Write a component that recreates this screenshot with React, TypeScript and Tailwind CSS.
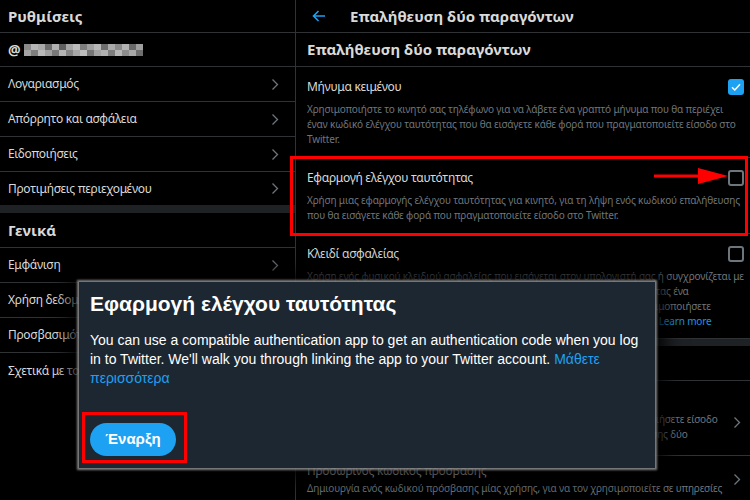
import type { ReactNode } from "react";

const line = "border-[#2f3336]";
const desc = "text-[10px] leading-[15px] tracking-[-0.15px] text-[#6e767d]";

function Chevron() {
  return (
    <svg width="8" height="13" viewBox="0 0 8 13" className="shrink-0">
      <path d="M1.5 1.5 L6.5 6.5 L1.5 11.5" fill="none" stroke="#6e767d" strokeWidth="1.3" />
    </svg>
  );
}

function Checkbox({ checked }: { checked?: boolean }) {
  if (checked) {
    return (
      <div className="w-[16px] h-[16px] rounded-[3px] bg-[#1da1f2] flex items-center justify-center shrink-0">
        <svg width="10" height="8" viewBox="0 0 10 8">
          <path d="M1 4.2 L3.8 7 L9 1.2" fill="none" stroke="#fff" strokeWidth="1.5" />
        </svg>
      </div>
    );
  }
  return <div className="w-[16px] h-[16px] rounded-[3px] border-2 border-[#6e767d] shrink-0" />;
}

function NavRow({ label, h = "h-[35px]", last }: { label: string; h?: string; last?: boolean }) {
  return (
    <div
      className={`${h} flex items-center justify-between pl-2 pr-[16px] text-[12px] tracking-[-0.3px] ${last ? "" : `border-b ${line}`}`}
    >
      <span>{label}</span>
      <Chevron />
    </div>
  );
}

const mosaic = [
  ["#8a8a8a", "#b5b5b5", "#a8a8a8", "#6c6c6c", "#b0b0b0", "#5f5f5f", "#a5a5a5", "#bcbcbc", "#7f7f7f", "#a0a0a0", "#b8b8b8", "#6d6d6d", "#a9a9a9", "#8a8a8a", "#b2b2b2", "#6a6a6a", "#9f9f9f"],
  ["#a4a4a4", "#7e7e7e", "#b9b9b9", "#a0a0a0", "#787878", "#b3b3b3", "#848484", "#a6a6a6", "#bdbdbd", "#757575", "#a2a2a2", "#b0b0b0", "#7d7d7d", "#b6b6b6", "#8c8c8c", "#a7a7a7", "#6e6e6e"],
];

function Item({
  title,
  lines,
  checked,
  pb = "pb-[10px]",
}: {
  title: string;
  lines: ReactNode[];
  checked?: boolean;
  pb?: string;
}) {
  return (
    <div className={`pt-[10px] ${pb} pl-[11px] pr-[6px] border-b ${line}`}>
      <div className="h-[20px] flex items-center justify-between">
        <span className="text-[12px] tracking-[-0.3px]">{title}</span>
        <Checkbox checked={checked} />
      </div>
      <div className={`mt-[5px] ${desc}`}>
        {lines.map((l, i) => (
          <div key={i} className="whitespace-nowrap">
            {l}
          </div>
        ))}
      </div>
    </div>
  );
}

export default function App() {
  return (
    <div className="relative w-[750px] h-[500px] overflow-hidden bg-black font-['Noto_Sans',sans-serif] text-[#d9d9d9]">
      <div className="flex h-full">
        {/* left: settings menu */}
        <aside className={`w-[296px] shrink-0 border-r ${line}`}>
          <div className={`h-[33px] border-b ${line} flex items-center px-2 text-[15px] font-bold`}>Ρυθμίσεις</div>
          <div className={`h-[34px] border-b ${line} flex items-center px-2`}>
            <span className="text-[14px] font-bold">@</span>
            <div className="ml-[3px] flex flex-col">
              {mosaic.map((row, r) => (
                <div key={r} className="flex">
                  {row.map((c, i) => (
                    <div key={i} className="w-[7px] h-[6px]" style={{ background: c }} />
                  ))}
                </div>
              ))}
            </div>
          </div>
          <NavRow label="Λογαριασμός" />
          <NavRow label="Απόρρητο και ασφάλεια" />
          <NavRow label="Ειδοποιήσεις" />
          <NavRow label="Προτιμήσεις περιεχομένου" h="h-[33px]" last />
          <div className="h-[8px] bg-[#1f2225]" />
          <div className={`h-[35px] border-b ${line} flex items-center px-2 text-[15px] font-bold`}>Γενικά</div>
          <NavRow label="Εμφάνιση" />
          <NavRow label="Χρήση δεδομένων" />
          <NavRow label="Προσβασιμότητα" />
          <NavRow label="Σχετικά με το Twitter" last />
        </aside>

        {/* right: two-factor page */}
        <main className="flex-1 min-w-0">
          <div className={`h-[33px] border-b ${line} flex items-center`}>
            <svg width="14" height="12" viewBox="0 0 14 12" className="ml-[16px]">
              <path d="M13 6 H1.5 M6.5 1 L1.5 6 L6.5 11" fill="none" stroke="#1da1f2" strokeWidth="1.6" />
            </svg>
            <span className="ml-[24px] text-[15px] font-bold">Επαλήθευση δύο παραγόντων</span>
          </div>
          <div className={`h-[34px] border-b ${line} flex items-center pl-[11px] text-[15px] font-bold`}>
            Επαλήθευση δύο παραγόντων
          </div>
          <Item
            title="Μήνυμα κειμένου"
            checked
            lines={[
              "Χρησιμοποιήστε το κινητό σας τηλέφωνο για να λάβετε ένα γραπτό μήνυμα που θα περιέχει",
              "έναν κωδικό ελέγχου ταυτότητας που θα εισάγετε κάθε φορά που πραγματοποιείτε είσοδο στο",
              "Twitter.",
            ]}
          />
          <Item
            title="Εφαρμογή ελέγχου ταυτότητας"
            lines={[
              "Χρήση μιας εφαρμογής ελέγχου ταυτότητας για κινητό, για τη λήψη ενός κωδικού επαλήθευσης",
              "που θα εισάγετε κάθε φορά που πραγματοποιείτε είσοδο στο Twitter.",
            ]}
          />
          <Item
            title="Κλειδί ασφαλείας"
            pb="pb-[9px]"
            lines={[
              "Χρήση ενός φυσικού κλειδιού ασφαλείας που εισάγεται στον υπολογιστή σας ή συγχρονίζεται με",
              "την κινητή συσκευή όταν πραγματοποιείτε είσοδο στο Twitter χρησιμοποιώντας ένα",
              "υποστηριζόμενο πρόγραμμα περιήγησης. Στις εφαρμογές θα πρέπει να χρησιμοποιήσετε",
              <>
                ένα άλλο μέσο για να πραγματοποιήσετε είσοδο μέσω της εφαρμογής Twitter.{" "}
                <span className="text-[#1b95e0]">Learn more</span>
              </>,
            ]}
          />
          <div className="h-[7px] bg-[#1f2225]" />
          <div className={`h-[35px] border-b ${line} flex items-center pl-[11px] text-[15px] font-bold`}>
            Πρόσθετες μέθοδοι
          </div>
          <div className={`h-[75px] border-b ${line} pl-[11px] pr-[9px] pt-[9px] flex items-center justify-between`}>
            <div className="self-start">
              <div className="text-[12px] tracking-[-0.3px] leading-[18px]">Κωδικός ανάκτησης</div>
              <div className={`mt-[4px] ${desc}`}>
                <div className="whitespace-nowrap">
                  Λάβετε έναν κωδικό ανάκτησης που θα χρησιμοποιήσετε για να πραγματοποιήσετε είσοδο
                </div>
                <div className="whitespace-nowrap">
                  αν χάσετε το κινητό σας ή αν δεν έχετε πρόσβαση στη μέθοδο της επαλήθευσης δύο
                </div>
                <div className="whitespace-nowrap">παραγόντων.</div>
              </div>
            </div>
            <Chevron />
          </div>
          <div className="pl-[11px] pr-[9px] pt-[6px] flex items-center justify-between">
            <div>
              <div className="text-[12px] tracking-[-0.3px] leading-[18px]">Προσωρινός κωδικός πρόσβασης</div>
              <div className={`mt-[1px] ${desc} whitespace-nowrap`}>
                Δημιουργία ενός κωδικού πρόσβασης μίας χρήσης, για να τον χρησιμοποιείτε σε υπηρεσίες
              </div>
            </div>
            <Chevron />
          </div>
        </main>
      </div>

      {/* annotation: red frame + arrow */}
      <div className="absolute left-[290px] top-[156px] w-[458px] h-[80px] border-[3px] border-[#ff0000]" />
      <svg width="74" height="18" viewBox="0 0 74 18" className="absolute left-[654px] top-[167px]">
        <path d="M0 9 H48" stroke="#ff0000" strokeWidth="3" />
        <polygon points="44,1 74,9 44,17" fill="#ff0000" />
      </svg>

      {/* modal */}
      <div className="absolute left-[79px] top-[282px] w-[576px] h-[186px] bg-[#1c2732] px-[11px] font-['Liberation_Sans',Arial,sans-serif] text-white shadow-[0_0_2px_2px_rgba(170,170,170,0.75),0_0_18px_10px_rgba(0,0,0,0.95)]">
        <div className="pt-[9px] text-[21px] leading-[26px] font-bold">Εφαρμογή ελέγχου ταυτότητας</div>
        <p className="mt-[14px] text-[14px] leading-[19px]">
          You can use a compatible authentication app to get an authentication code when you log in to Twitter. We'll walk you
          through linking the app to your Twitter account. <span className="text-[#1da1f2]">Μάθετε περισσότερα</span>
        </p>
        <button className="mt-[35px] h-[33px] w-[86px] rounded-full bg-[#1da1f2] text-[15px] font-bold text-white">
          Έναρξη
        </button>
        <div className="absolute left-[3px] top-[130px] w-[105px] h-[51px] border-[3px] border-[#ff0000]" />
      </div>
    </div>
  );
}
